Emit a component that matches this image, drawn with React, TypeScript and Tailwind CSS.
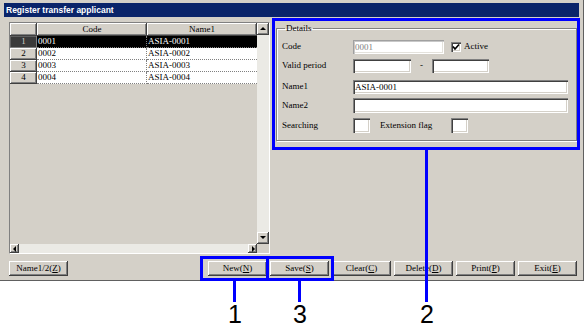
import React from 'react';

const raised =
  'bg-[#d4d0c8] shadow-[inset_-1px_-1px_0_#404040,inset_1px_1px_0_#ffffff,inset_-2px_-2px_0_#808080]';
const sunken =
  'bg-white shadow-[inset_1px_1px_0_#808080,inset_2px_2px_0_#404040,inset_-1px_-1px_0_#ffffff,inset_-2px_-2px_0_#d4d0c8]';
const sunkenOff =
  'bg-white shadow-[inset_1px_1px_0_#a0a0a0,inset_2px_2px_0_#c8c8c8,inset_-1px_-1px_0_#ffffff,inset_-2px_-2px_0_#e4e2dc]';

const rows = [
  { n: '1', code: '0001', name: 'ASIA-0001' },
  { n: '2', code: '0002', name: 'ASIA-0002' },
  { n: '3', code: '0003', name: 'ASIA-0003' },
  { n: '4', code: '0004', name: 'ASIA-0004' },
];

const Arrow = ({ dir }: { dir: 'up' | 'down' | 'left' | 'right' }) => {
  const pts = {
    up: '1,5 4,2 7,5',
    down: '1,2 4,5 7,2',
    left: '5,1 2,4 5,7',
    right: '3,1 6,4 3,7',
  }[dir];
  return (
    <svg width="8" height="8" viewBox="0 0 8 8">
      <polygon points={pts} fill="#000" />
    </svg>
  );
};

const Grid = () => (
  <div className="w-[261px] h-[232px] flex flex-col border border-[#808080] border-r-white border-b-white bg-[#d4d0c8]">
    <div className="flex flex-1 min-h-0">
      <div className="w-[247px] flex flex-col">
        {/* header */}
        <div className="flex h-[13px] leading-[13px]">
          <div className={`w-[27px] ${raised}`} />
          <div className={`w-[110px] text-center ${raised}`}>Code</div>
          <div className={`w-[110px] text-center ${raised}`}>Name1</div>
        </div>
        {rows.map((r, i) => {
          const sel = i === 0;
          return (
            <div key={r.n} className="flex h-[12px] leading-[11px]">
              <div
                className={`w-[27px] text-center ${
                  sel
                    ? 'bg-[#3a3a3a] text-[#d4d0c8] shadow-[inset_-1px_-1px_0_#808080,inset_1px_1px_0_#606060]'
                    : raised
                }`}
              >
                {r.n}
              </div>
              <div
                className={`w-[110px] pl-[1px] border-r border-b border-dotted border-[#808080] ${
                  sel ? 'bg-black text-white' : 'bg-white'
                }`}
              >
                {r.code}
              </div>
              <div
                className={`w-[110px] pl-[1px] border-b border-dotted border-[#808080] ${
                  sel ? 'bg-black text-white' : 'bg-white'
                }`}
              >
                {r.name}
              </div>
            </div>
          );
        })}
      </div>
      {/* vertical scrollbar */}
      <div className="w-[12px] flex flex-col bg-[#ebeae5]">
        <div className={`h-[12px] flex items-center justify-center ${raised}`}>
          <Arrow dir="up" />
        </div>
        <div className="flex-1" />
        <div className={`h-[12px] flex items-center justify-center ${raised}`}>
          <Arrow dir="down" />
        </div>
      </div>
    </div>
    {/* horizontal scrollbar */}
    <div className="flex h-[9px]">
      <div className="w-[247px] flex bg-[#ebeae5]">
        <div className={`w-[9px] flex items-center justify-center ${raised}`}>
          <Arrow dir="left" />
        </div>
        <div className="flex-1" />
        <div className={`w-[9px] flex items-center justify-center ${raised}`}>
          <Arrow dir="right" />
        </div>
      </div>
      <div className="w-[12px] bg-[#d4d0c8]" />
    </div>
  </div>
);

const Details = () => (
  <fieldset className="ml-[6px] mt-[1px] w-[301px] h-[118px] border border-[#808080] shadow-[1px_1px_0_#ffffff,inset_1px_1px_0_#ffffff] pl-[5px]">
    <legend className="ml-[3px] px-[1px] leading-[11px]">Details</legend>
    {/* Code */}
    <div className="flex items-center h-[14px] mt-[6px]">
      <span className="w-[71px]">Code</span>
      <div className={`w-[91px] h-[14px] pl-[2px] leading-[14px] text-[#808080] ${sunkenOff}`}>0001</div>
      <div className={`ml-[7px] w-[10px] h-[10px] flex items-center justify-center ${sunken}`}>
        <svg width="8" height="8" viewBox="0 0 8 8">
          <polyline points="1,3.5 3,6 7,1.5" fill="none" stroke="#000" strokeWidth="1.6" />
        </svg>
      </div>
      <span className="ml-[3px]">Active</span>
    </div>
    {/* Valid period */}
    <div className="flex items-center h-[14px] mt-[5px]">
      <span className="w-[71px]">Valid period</span>
      <div className={`w-[58px] h-[14px] ${sunken}`} />
      <span className="w-[21px] text-center">-</span>
      <div className={`w-[57px] h-[14px] ${sunken}`} />
    </div>
    {/* Name1 */}
    <div className="flex items-center h-[14px] mt-[7px]">
      <span className="w-[71px]">Name1</span>
      <div className={`w-[215px] h-[14px] pl-[2px] leading-[14px] ${sunken}`}>ASIA-0001</div>
    </div>
    {/* Name2 */}
    <div className="flex items-center h-[15px] mt-[4px]">
      <span className="w-[71px]">Name2</span>
      <div className={`w-[215px] h-[15px] ${sunken}`} />
    </div>
    {/* Searching / Extension flag */}
    <div className="flex items-center h-[15px] mt-[5px]">
      <span className="w-[71px]">Searching</span>
      <div className={`w-[17px] h-[15px] ${sunken}`} />
      <span className="ml-[10px] w-[71px]">Extension flag</span>
      <div className={`w-[17px] h-[15px] ${sunken}`} />
    </div>
  </fieldset>
);

const Btn = ({ label, k, after = ')' }: { label: string; k: string; after?: string }) => (
  <button className={`w-[59px] h-[15px] leading-[15px] text-center ${raised}`}>
    {label}(<u>{k}</u>){after === ')' ? '' : after}
  </button>
);

export default function App() {
  return (
    <div className="relative w-[585px] h-[332px] bg-white overflow-hidden font-['Liberation_Serif',serif] text-[9px] text-black">
      {/* Window */}
      <div className="w-[584px] h-[281px] bg-[#d4d0c8] border-r border-b border-[#606060] pt-[3px] flex flex-col">
        <div className="mx-[4px] h-[14px] bg-[#0a246a] text-white font-['Liberation_Sans',sans-serif] font-bold text-[8.5px] leading-[14px] pl-[2px]">
          Register transfer applicant
        </div>

        <div className="flex pl-[9px] mt-[5px]">
          <Grid />
          <Details />
        </div>

        <div className="flex pl-[9px] mt-[7px]">
          <Btn label="Name1/2" k="Z" />
          <div className="ml-[140px] flex gap-[3px]">
            <Btn label="New" k="N" />
            <Btn label="Save" k="S" />
            <Btn label="Clear" k="C" />
            <Btn label="Delete" k="D" />
            <Btn label="Print" k="P" />
            <Btn label="Exit" k="E" />
          </div>
        </div>
      </div>

      {/* Annotations */}
      <div className="absolute left-[272px] top-[18px] w-[308px] h-[132px] border-[3px] border-[#0000ff]" />
      <div className="absolute left-[200px] top-[256px] w-[69px] h-[25px] border-[3px] border-[#0000ff]" />
      <div className="absolute left-[266px] top-[256px] w-[68px] h-[25px] border-[3px] border-[#0000ff]" />
      <div className="absolute left-[233px] top-[281px] w-[3px] h-[21px] bg-[#0000ff]" />
      <div className="absolute left-[298px] top-[281px] w-[3px] h-[21px] bg-[#0000ff]" />
      <div className="absolute left-[425px] top-[150px] w-[3px] h-[152px] bg-[#0000ff]" />
      <div className="absolute top-[300px] left-[220px] w-[30px] text-center font-['Liberation_Sans',sans-serif] text-[25px] leading-[28px]">1</div>
      <div className="absolute top-[300px] left-[285px] w-[30px] text-center font-['Liberation_Sans',sans-serif] text-[25px] leading-[28px]">3</div>
      <div className="absolute top-[300px] left-[412px] w-[30px] text-center font-['Liberation_Sans',sans-serif] text-[25px] leading-[28px]">2</div>
    </div>
  );
}
